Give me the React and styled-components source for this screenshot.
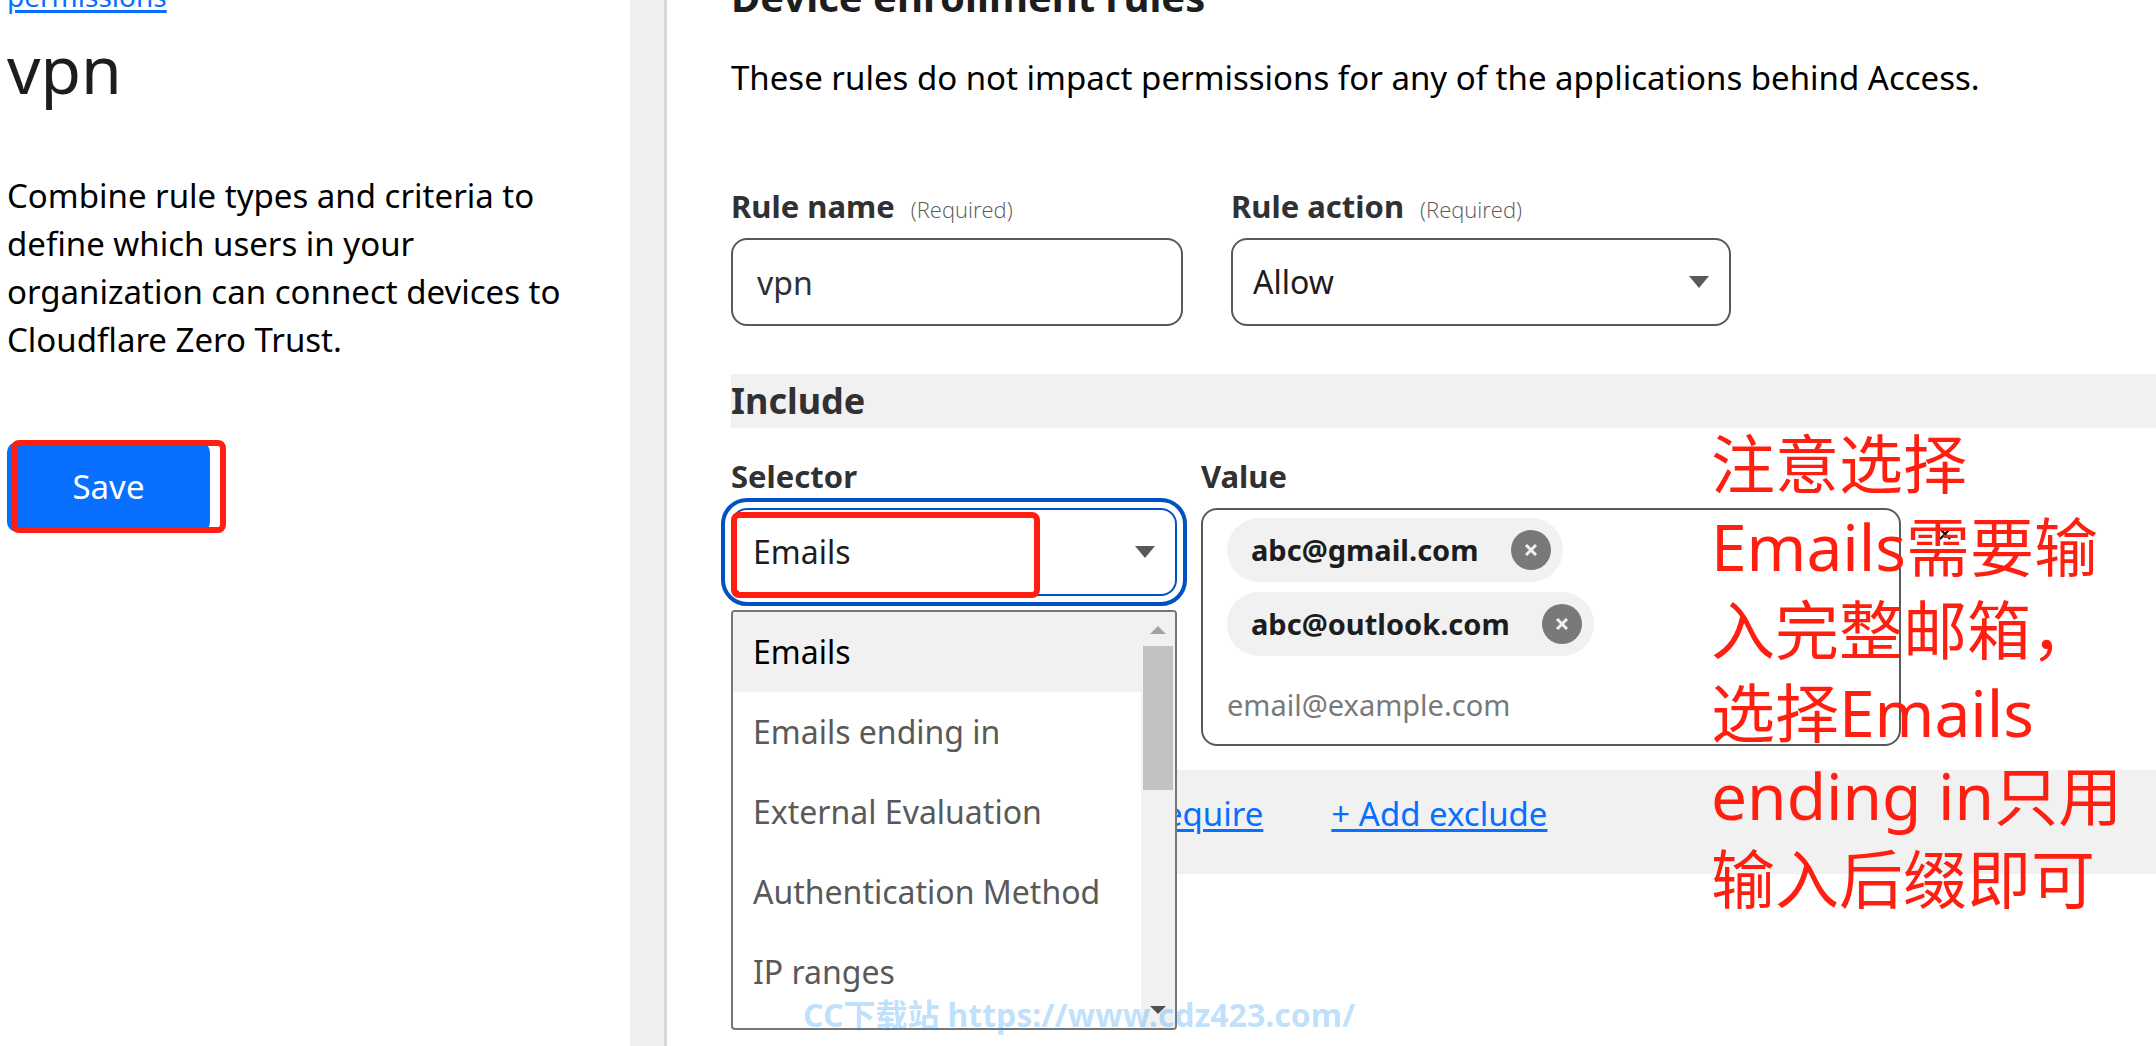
import styled, { createGlobalStyle } from "styled-components"

const GlobalStyle = createGlobalStyle`
  * {
    box-sizing: border-box;
  }

  body {
    margin: 0;
    background: white;
    color: #000;
    font-family: "Noto Sans", "Noto Sans CJK SC", sans-serif;
    font-size: 33px;
    line-height: 48px;
  }

  h1, h2, h3, p, ul {
    margin: 0;
    padding: 0;
  }

  input, select, button {
    font: inherit;
  }
`

const Layout = styled.div`
  display: flex;
  min-height: 100vh;
  overflow: hidden;
`

const Sidebar = styled.aside`
  display: flex;
  flex: 0 0 667px;
  border-right: 3px solid #d9d9d9;
`

const SidebarContent = styled.div`
  flex: 1;
  margin-top: -28px;
  padding: 0 48px 0 7px;
`

const SidebarTrack = styled.div`
  width: 34px;
  background: #f0f0f0;
`

const Link = styled.a`
  color: #086fff;
  text-decoration: underline;
  text-decoration-thickness: 3px;
  text-underline-offset: 3px;
`

const BackLink = styled(Link)`
  display: block;
  font-size: 28px;
`

const PageTitle = styled.h1`
  margin-top: 8px;
  color: #1d1d1d;
  font-size: 66px;
  font-weight: 400;
  line-height: 80px;
`

const Intro = styled.p`
  margin: 64px 0 78px;
`

const Marked = styled.div`
  position: relative;
  display: ${({ $inline }) => ($inline ? "inline-block" : "block")};
`

const SaveButton = styled.button`
  display: block;
  width: 203px;
  height: 90px;
  border: 0;
  border-radius: 10px;
  background: #086fff;
  color: white;
`

const RedFrame = styled.span`
  position: absolute;
  top: ${({ $top }) => $top}px;
  left: ${({ $left }) => $left}px;
  width: ${({ $width }) => $width}px;
  height: ${({ $height }) => $height}px;
  border: 6px solid #ff1f10;
  border-radius: 8px;
  pointer-events: none;
`

const Main = styled.main`
  position: relative;
  flex: 1;
  min-width: 0;
  margin-top: -27px;
  padding-left: 64px;
`

const SectionTitle = styled.h2`
  color: #1d1d1d;
  font-size: 40px;
  font-weight: 700;
  line-height: 48px;
`

const Description = styled.p`
  margin: 33px 0 84px;
`

const FieldRow = styled.div`
  display: flex;
  align-items: flex-start;
  gap: ${({ $gap }) => $gap}px;
`

const Field = styled.div`
  position: relative;
  flex: 0 1 ${({ $width }) => $width}px;
  min-width: 0;
`

const Label = styled.label`
  display: block;
  margin-bottom: 12px;
  color: #313131;
  font-size: 31px;
  font-weight: 700;
  line-height: 40px;
`

const Required = styled.span`
  margin-left: 16px;
  color: #595959;
  font-family: "Open Sans", sans-serif;
  font-size: 22px;
  font-weight: 300;
  line-height: 1;
`

const TextInput = styled.input`
  display: block;
  width: 100%;
  height: 88px;
  padding: 0 24px;
  border: 2px solid #595959;
  border-radius: 16px;
  background: white;
  color: #313131;
  font-size: 32px;
`

const SelectBox = styled.div`
  position: relative;

  svg {
    position: absolute;
    top: 38px;
    right: 22px;
    pointer-events: none;
  }
`

const Select = styled.select`
  display: block;
  width: 100%;
  height: 88px;
  padding: 0 64px 0 20px;
  appearance: none;
  border: 2px solid ${({ $active }) => ($active ? "#0051c3" : "#595959")};
  border-radius: 16px;
  outline: ${({ $active }) => ($active ? "4px solid #0051c3" : "none")};
  outline-offset: 6px;
  background: white;
  color: #1d1d1d;
  font-size: 32px;
`

const GroupTitle = styled.h3`
  margin: 48px 0 28px;
  background: #f1f1f1;
  color: #313131;
  font-size: 36px;
  font-weight: 700;
  line-height: 54px;
`

const Menu = styled.div`
  position: absolute;
  z-index: 2;
  top: 154px;
  left: 0;
  display: flex;
  width: 100%;
  height: 420px;
  overflow: hidden;
  border: 2px solid #767676;
  border-radius: 4px;
  background: white;
  font-size: 32px;
`

const Options = styled.ul`
  flex: 1;
  list-style: none;
`

const Option = styled.li`
  padding: 0 20px;
  background: ${({ $selected }) => ($selected ? "#f1f1f1" : "white")};
  color: ${({ $selected }) => ($selected ? "#000" : "#595959")};
  line-height: 80px;
  white-space: nowrap;
`

const Scrollbar = styled.div`
  display: flex;
  flex-direction: column;
  align-items: center;
  width: 34px;
  padding: 14px 0;
  background: #f1f1f1;
`

const Thumb = styled.div`
  width: 30px;
  height: 144px;
  margin: 12px 0 auto;
  background: #c1c1c1;
`

const ValueBox = styled.div`
  display: flex;
  flex-direction: column;
  align-items: flex-start;
  gap: 10px;
  padding: 8px 24px;
  border: 2px solid #595959;
  border-radius: 16px;
  font-size: 29px;
`

const Chip = styled.span`
  display: flex;
  align-items: center;
  gap: 32px;
  height: 64px;
  padding: 0 12px 0 24px;
  border-radius: 32px;
  background: #f1f1f1;
  color: #1d1d1d;
  font-weight: 700;
`

const RemoveButton = styled.button`
  display: grid;
  place-items: center;
  width: 40px;
  height: 40px;
  padding: 0;
  border: 0;
  border-radius: 50%;
  background: #797979;
  color: #f1f1f1;
`

const EmailInput = styled.input`
  width: 100%;
  height: 64px;
  margin-top: 6px;
  padding: 0;
  border: 0;
  outline: none;
  background: transparent;

  &::placeholder {
    color: #797979;
    opacity: 1;
  }
`

const ClearButton = styled.button`
  display: grid;
  place-items: center;
  width: 40px;
  height: 40px;
  margin-top: 58px;
  padding: 0;
  border: 0;
  background: transparent;
  color: #000;
`

const Actions = styled.div`
  display: flex;
  gap: 68px;
  margin-top: 24px;
  padding: 20px 0 36px 44px;
  background: #f1f1f1;
`

const Note = styled.p`
  position: absolute;
  z-index: 3;
  top: 449px;
  left: 1044px;
  color: #ff1f10;
  font-size: 64px;
  line-height: 83px;
  white-space: nowrap;
`

const Watermark = styled.div`
  position: absolute;
  z-index: 3;
  top: 1018px;
  left: 136px;
  display: flex;
  gap: 8px;
  color: rgba(33, 150, 243, 0.3);
  font-size: 32px;
  font-weight: 700;
  white-space: nowrap;
`

const options = ["Emails", "Emails ending in", "External Evaluation", "Authentication Method", "IP ranges"]
const emails = ["abc@gmail.com", "abc@outlook.com"]
const noteLines = ["注意选择", "Emails需要输", "入完整邮箱，", "选择Emails", "ending in只用", "输入后缀即可"]

function Caret({ up, width = 20, height = 12, color = "#595959" }) {
  return (
    <svg width={width} height={height} viewBox="0 0 20 12" preserveAspectRatio="none" aria-hidden="true">
      <path d={up ? "M0 12h20L10 0z" : "M0 0h20L10 12z"} fill={color} />
    </svg>
  )
}

function Cross({ size = 12, stroke = 3 }) {
  return (
    <svg width={size} height={size} viewBox="0 0 12 12" aria-hidden="true">
      <path d="M1 1l10 10M11 1L1 11" stroke="currentColor" strokeWidth={stroke} />
    </svg>
  )
}

export default function App() {
  return (
    <>
      <GlobalStyle />
      <Layout>
        <Sidebar>
          <SidebarContent>
            <BackLink href="#permissions">permissions</BackLink>
            <PageTitle>vpn</PageTitle>
            <Intro>
              Combine rule types and criteria to define which users in your organization can connect devices to
              Cloudflare Zero Trust.
            </Intro>
            <Marked $inline>
              <SaveButton type="button">Save</SaveButton>
              <RedFrame $top={-2} $left={4} $width={215} $height={93} />
            </Marked>
          </SidebarContent>
          <SidebarTrack />
        </Sidebar>

        <Main>
          <SectionTitle>Device enrollment rules</SectionTitle>
          <Description>These rules do not impact permissions for any of the applications behind Access.</Description>

          <FieldRow $gap={48}>
            <Field $width={452}>
              <Label htmlFor="rule-name">
                Rule name<Required>(Required)</Required>
              </Label>
              <TextInput id="rule-name" defaultValue="vpn" />
            </Field>
            <Field $width={500}>
              <Label htmlFor="rule-action">
                Rule action<Required>(Required)</Required>
              </Label>
              <SelectBox>
                <Select id="rule-action" defaultValue="Allow">
                  <option>Allow</option>
                </Select>
                <Caret />
              </SelectBox>
            </Field>
          </FieldRow>

          <GroupTitle>Include</GroupTitle>

          <FieldRow $gap={24}>
            <Field $width={446}>
              <Label htmlFor="selector">Selector</Label>
              <Marked>
                <SelectBox>
                  <Select id="selector" defaultValue="Emails" $active>
                    {options.map((option) => (
                      <option key={option}>{option}</option>
                    ))}
                  </Select>
                  <Caret />
                </SelectBox>
                <RedFrame $top={4} $left={0} $width={309} $height={86} />
              </Marked>
              <Menu>
                <Options role="listbox" aria-label="Selector">
                  {options.map((option, i) => (
                    <Option key={option} role="option" aria-selected={i === 0} $selected={i === 0}>
                      {option}
                    </Option>
                  ))}
                </Options>
                <Scrollbar>
                  <Caret up width={16} height={8} color="#a3a3a3" />
                  <Thumb />
                  <Caret width={16} height={8} color="#505050" />
                </Scrollbar>
              </Menu>
            </Field>
            <Field $width={700}>
              <Label htmlFor="value">Value</Label>
              <ValueBox>
                {emails.map((email) => (
                  <Chip key={email}>
                    {email}
                    <RemoveButton type="button" aria-label={`Remove ${email}`}>
                      <Cross />
                    </RemoveButton>
                  </Chip>
                ))}
                <EmailInput id="value" placeholder="email@example.com" />
              </ValueBox>
            </Field>
            <Field $width={64}>
              <ClearButton type="button" aria-label="Remove rule">
                <Cross stroke={2} />
              </ClearButton>
            </Field>
          </FieldRow>

          <Actions>
            <Link href="#include">+ Add include</Link>
            <Link href="#require">+ Add require</Link>
            <Link href="#exclude">+ Add exclude</Link>
          </Actions>

          <Note lang="zh-CN">
            {noteLines.map((line) => (
              <span key={line}>
                {line}
                <br />
              </span>
            ))}
          </Note>
          <Watermark>
            <span>CC下载站</span>
            <span>https://www.cdz423.com/</span>
          </Watermark>
        </Main>
      </Layout>
    </>
  )
}
